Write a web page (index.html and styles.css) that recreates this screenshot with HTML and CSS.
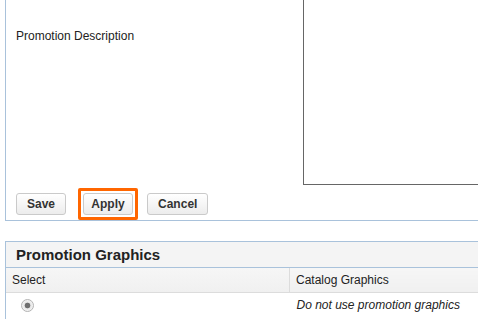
FILE: index.html
```html
<!DOCTYPE html>
<html lang="en">
<head>
    <meta charset="UTF-8">
    <meta name="viewport" content="width=device-width, initial-scale=1.0">
    <title>Promotion - Edit</title>
    <link rel="stylesheet" href="styles.css">
</head>
<body>
    <div class="panel promo-form">
        <div class="field-row">
            <label class="field-label" for="promo-desc">Promotion Description</label>
            <textarea class="field-input" id="promo-desc" name="promo-desc"></textarea>
        </div>
        <div class="button-bar">
            <button type="button" class="btn">Save</button>
            <span class="highlight"><button type="button" class="btn btn-narrow">Apply</button></span>
            <button type="button" class="btn">Cancel</button>
        </div>
    </div>

    <div class="panel graphics">
        <h2 class="panel-title">Promotion Graphics</h2>
        <table class="grid">
            <thead>
                <tr>
                    <th class="col-select">Select</th>
                    <th class="col-graphics">Catalog Graphics</th>
                </tr>
            </thead>
            <tbody>
                <tr>
                    <td class="col-select"><span class="radio checked disabled"></span></td>
                    <td class="col-graphics"><em>Do not use promotion graphics</em></td>
                </tr>
            </tbody>
        </table>
    </div>
</body>
</html>
```

FILE: styles.css
```css
/* Promotion edit page */
body {
    font-family: "Liberation Sans", Arial, sans-serif;
    font-size: 12px;
    color: #222;
    margin: 0;
    background: #fff;
    overflow: hidden;
}
.panel {
    margin-left: 5px;
    border: 1px solid #a9c2db;
    border-right: none;
}
.promo-form {
    border-top: none;
}
.field-row {
    display: flex;
}
.field-label {
    width: 287px;
    padding: 28px 0 0 10px;
    line-height: 16px;
}
.field-input {
    flex: 1;
    box-sizing: border-box;
    height: 185px;
    margin: 0;
    border: 1px solid #666;
    border-top: none;
    border-right: none;
    resize: none;
    font-family: inherit;
}
.button-bar {
    display: flex;
    align-items: center;
    padding: 3px 0 0 10px;
}
.btn {
    height: 22px;
    min-width: 50px;
    padding: 0 10px;
    border: 1px solid #cacaca;
    border-radius: 3px;
    background: linear-gradient(#ffffff, #ececec);
    font-family: inherit;
    font-size: 12px;
    font-weight: bold;
    color: #333;
    cursor: pointer;
}
.btn-narrow {
    padding: 0 5px;
}
.highlight {
    display: inline-flex;
    padding: 2px;
    margin: 0 9px 0 12px;
    border: 3px solid #ff6600;
    border-radius: 2px;
}
.graphics {
    margin-top: 20px;
}
.panel-title {
    margin: 0;
    height: 25px;
    line-height: 25px;
    padding-left: 10px;
    font-size: 15px;
    color: #222;
    background: #f4f4f4;
    border-bottom: 1px solid #a9c2db;
}
.grid {
    width: 100%;
    border-collapse: collapse;
}
.grid th {
    height: 24px;
    padding: 0 6px;
    text-align: left;
    font-weight: normal;
    background: linear-gradient(#f6f6f6, #f0f0f0);
    border-bottom: 1px solid #dcdcdc;
}
.grid td {
    height: 24px;
    padding: 0 6px 4px;
}
.grid th.col-select {
    width: 271px;
}
.grid th.col-graphics {
    border-left: 1px solid #dcdcdc;
}
.grid td.col-graphics {
    padding-left: 7px;
    color: #222;
}
.grid td.col-select {
    padding-left: 15px;
}
.radio {
    display: inline-block;
    box-sizing: border-box;
    width: 13px;
    height: 13px;
    border: 1px solid #b4b4b4;
    border-radius: 50%;
    background: radial-gradient(circle, #6e6e6e 0, #6e6e6e 2.5px, #e6e6e6 3.2px, #f6f6f6 6px);
    vertical-align: middle;
}
```
